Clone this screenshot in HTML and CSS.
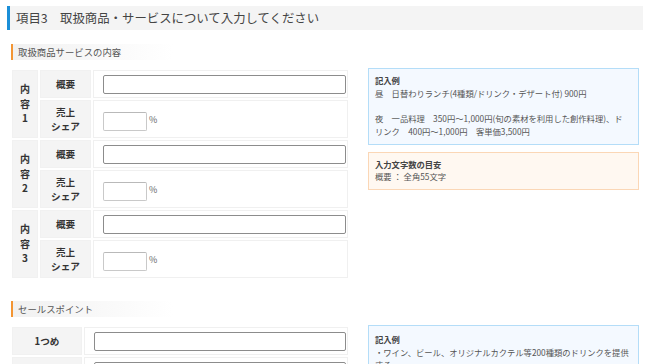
FILE: index.html
```html
<!DOCTYPE html>
<html lang="ja">
<head>
<meta charset="utf-8">
<title>項目3 取扱商品・サービス</title>
<link rel="stylesheet" href="styles.css">
</head>
<body>
<div class="page">
  <h1 class="title-bar">項目3　取扱商品・サービスについて入力してください</h1>

  <section class="section">
    <h2 class="sub-heading">取扱商品サービスの内容</h2>
    <div class="section-body">
      <table class="form-table">
        <colgroup><col class="c1"><col class="c2"><col class="c3"></colgroup>
        <tbody>
          <tr class="row-short">
            <th class="group" rowspan="2">内<br>容<br>1</th>
            <th>概要</th>
            <td><input class="text-input" type="text"></td>
          </tr>
          <tr class="row-tall">
            <th>売上<br>シェア</th>
            <td><input class="pct-input" type="text"><span class="unit">%</span></td>
          </tr>
          <tr class="row-short">
            <th class="group" rowspan="2">内<br>容<br>2</th>
            <th>概要</th>
            <td><input class="text-input" type="text"></td>
          </tr>
          <tr class="row-tall">
            <th>売上<br>シェア</th>
            <td><input class="pct-input" type="text"><span class="unit">%</span></td>
          </tr>
          <tr class="row-short">
            <th class="group" rowspan="2">内<br>容<br>3</th>
            <th>概要</th>
            <td><input class="text-input" type="text"></td>
          </tr>
          <tr class="row-tall">
            <th>売上<br>シェア</th>
            <td><input class="pct-input" type="text"><span class="unit">%</span></td>
          </tr>
        </tbody>
      </table>
      <aside class="notes">
        <div class="note note-blue">
          <p class="note-title">記入例</p>
          <p>昼　日替わりランチ(4種類/ドリンク・デザート付) 900円</p>
          <p class="gap">夜　一品料理　350円～1,000円(旬の素材を利用した創作料理)、ドリンク　400円～1,000円　客単価3,500円</p>
        </div>
        <div class="note note-orange">
          <p class="note-title">入力文字数の目安</p>
          <p>概要 ： 全角55文字</p>
        </div>
      </aside>
    </div>
  </section>

  <section class="section section-2">
    <h2 class="sub-heading">セールスポイント</h2>
    <div class="section-body">
      <table class="form-table form-table-2">
        <colgroup><col class="c-wide"><col class="c3"></colgroup>
        <tbody>
          <tr class="row-short">
            <th>1つめ</th>
            <td><input class="text-input narrow" type="text"></td>
          </tr>
          <tr class="row-short">
            <th>2つめ</th>
            <td><input class="text-input narrow" type="text"></td>
          </tr>
        </tbody>
      </table>
      <aside class="notes">
        <div class="note note-blue">
          <p class="note-title">記入例</p>
          <p>・ワイン、ビール、オリジナルカクテル等200種類のドリンクを提供する</p>
        </div>
      </aside>
    </div>
  </section>
</div>
</body>
</html>
```
FILE: styles.css
```css
* { box-sizing: border-box; }
html, body { margin: 0; padding: 0; background: #fff; }
body {
  font-family: "Noto Sans CJK JP", "Noto Sans", sans-serif;
  color: #444;
}
.page { padding: 6px 2px 0 7px; }

.title-bar {
  margin: 0;
  height: 24px;
  line-height: 24px;
  background: #f4f4f4;
  border-left: 3px solid #1b8fd8;
  padding-left: 6px;
  font-size: 12.4px;
  font-weight: normal;
  color: #444;
  white-space: nowrap;
}

.section { margin-top: 14px; padding-left: 3px; }
.section-2 { margin-top: 21px; }

.sub-heading {
  margin: 0 0 0 1px;
  height: 16px;
  line-height: 16px;
  border-left: 2px solid #f39533;
  padding-left: 5px;
  font-size: 9.4px;
  font-weight: normal;
  color: #555;
  background: linear-gradient(to right, #f1f1f1 0px, #ffffff 160px);
  width: 340px;
}

.section-body {
  display: flex;
  align-items: flex-start;
  gap: 18px;
  margin-top: 8px;
}

.form-table {
  border-collapse: separate;
  border-spacing: 2px;
  width: 340px;
  table-layout: fixed;
  flex: none;
}
.form-table col.c1 { width: 26px; }
.form-table col.c2 { width: 51px; }
.form-table col.c3 { width: 255px; }
.form-table col.c-wide { width: 70px; }
.form-table-2 col.c3 { width: 264px; }

.form-table th {
  background: #f4f4f4;
  border: 1px solid #f1f1f1;
  font-size: 9.6px;
  font-weight: bold;
  color: #333;
  line-height: 14px;
  text-align: center;
  padding: 0;
}
.form-table th.group { line-height: 14.5px; font-size: 10px; }
.form-table td {
  border: 1px solid #f0f0f0;
  padding: 0 2px 0 9px;
  background: #fff;
  white-space: nowrap;
}
.row-short th, .row-short td { height: 28px; }
.row-tall th, .row-tall td { height: 38px; }

.text-input {
  display: block;
  width: 243px;
  height: 19px;
  border: 1px solid #8c8c8c;
  border-radius: 2px;
  background: #fff;
  padding: 0;
  margin: 0;
}
.text-input.narrow { width: 252px; }
.pct-input {
  display: inline-block;
  vertical-align: middle;
  width: 44px;
  height: 19px;
  border: 1px solid #c9c9c9;
  border-top-color: #b9b9b9;
  border-radius: 2px;
  background: #fff;
  padding: 0;
  margin: 0;
}
.unit {
  display: inline-block;
  vertical-align: middle;
  margin-left: 2px;
  font-size: 9px;
  color: #666;
  position: relative;
  top: -2px;
}

.notes { width: 271px; flex: none; }
.note {
  border: 1px solid #b4ddf8;
  background: #f4f9ff;
  padding: 5px 13px 6px 6px;
  font-size: 8.3px;
  line-height: 12.7px;
  color: #555;
}
.note p { margin: 0; }
.note .gap { margin-top: 12.7px; }
.note-title { font-weight: bold; color: #444; }
.note-orange {
  margin-top: 7px;
  border-color: #fbd7b6;
  background: #fff8f1;
}
.section-2 .note { padding: 7px 9px 6px 6px; }
```
